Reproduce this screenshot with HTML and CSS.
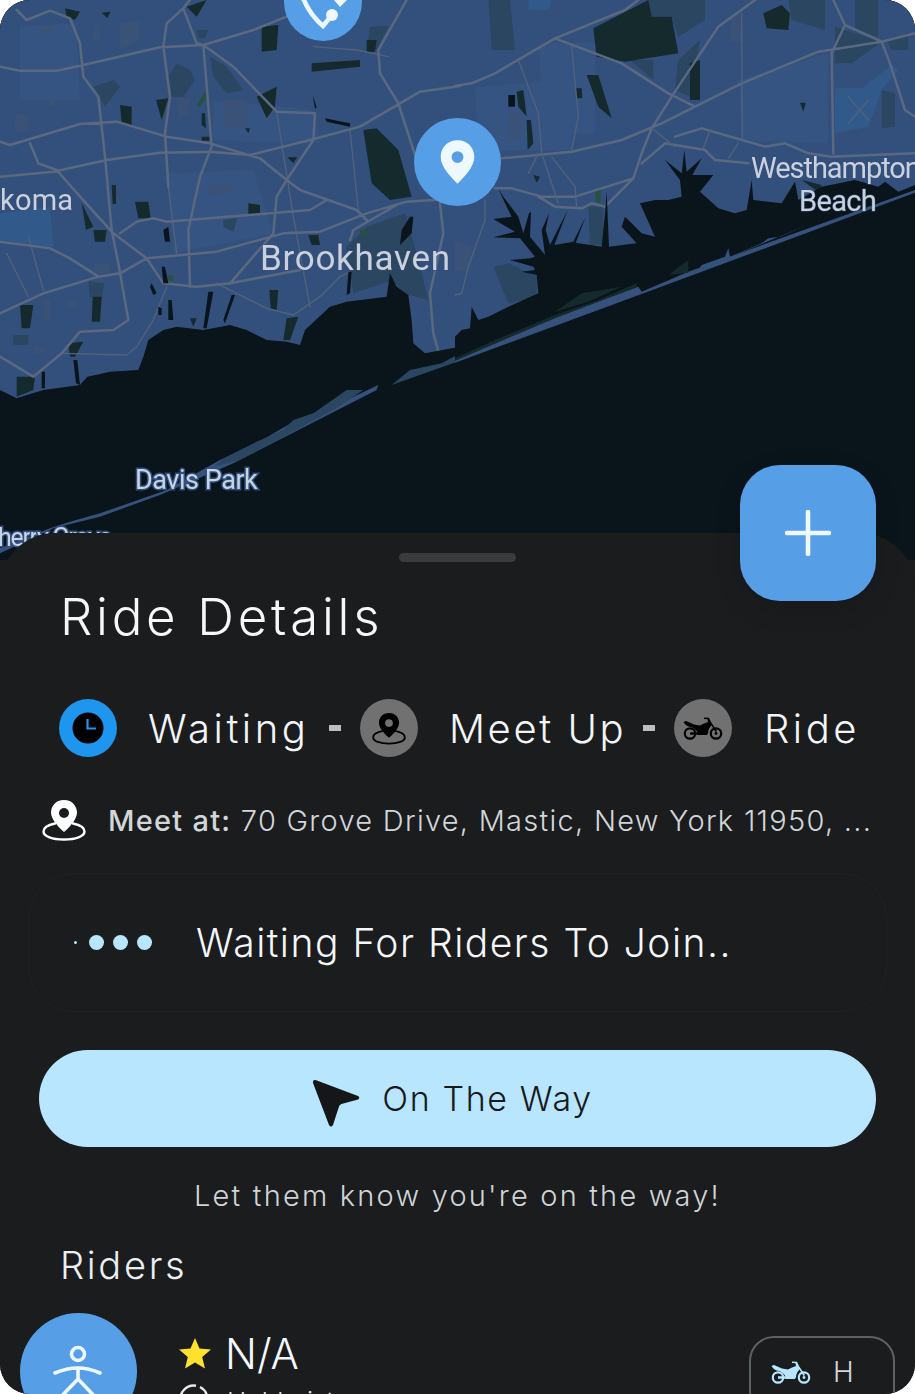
FILE: index.html
```html
<!DOCTYPE html>
<html lang="en">
<head>
<meta charset="utf-8">
<title>Ride Details</title>
<link rel="stylesheet" href="styles.css">
</head>
<body>
<svg class="defs" width="0" height="0" aria-hidden="true">
  <symbol id="moto" viewBox="0 0 40 23">
    <circle cx="7" cy="16.5" r="5.2" fill="none" stroke="currentColor" stroke-width="2.2"/>
    <circle cx="33" cy="16.5" r="5.2" fill="none" stroke="currentColor" stroke-width="2.2"/>
    <circle cx="33" cy="16.5" r="1.4" fill="currentColor"/>
    <path fill="currentColor" d="M0.5 5 L3 4 L11 7.5 L17 8.5 Q20 6.5 25 5 L24.5 2.2 L21 2 L21 0.5 L26 0.8 L28 5 L34 14 L32.5 15 L28.5 8.5 Q25.5 11 25 16 L24 18 L15 18 L14.5 15.5 Q12 11 8 10 Q3 9.5 0.5 5 Z"/>
    <path fill="currentColor" d="M7 15.3 H15 V17.7 H7 Z"/>
  </symbol>
  <symbol id="meet" viewBox="0 0 44 42">
    <path fill="currentColor" fill-rule="evenodd" d="M22 1 C13.5 1 9 7.5 9 13.5 C9 20 16 28 22 33 C28 28 35 20 35 13.5 C35 7.5 30.5 1 22 1 Z M22 9 A5 5 0 1 1 22 19 A5 5 0 0 1 22 9 Z"/>
    <path fill="none" stroke="currentColor" stroke-width="2.4" stroke-linecap="round" d="M13 24.5 C6 26 1.5 29 1.5 32.5 C1.5 37.5 10.5 40.5 22 40.5 C33.5 40.5 42.5 37.5 42.5 32.5 C42.5 29 38 26 31 24.5"/>
  </symbol>
</svg>

<main class="screen">
  <section class="map">
    <svg class="map-art" viewBox="0 0 915 560" aria-hidden="true">
      <rect class="land" width="915" height="560"/>
      <g transform="scale(.33333)">
        <path class="land-b" d="M500 520 L760 510 L820 700 L520 760 Z M640 300 L940 330 L960 430 L640 420 Z M60 80 L230 70 L240 300 L60 300 Z"/>
        <path class="land-c" d="M0 640 L150 620 L160 740 L0 720 Z"/>
        <path class="gray" d="M125 75 L155 75 L155 105 L125 105 Z M280 75 L300 75 L300 120 L280 120 Z M45 345 L85 345 L85 395 L45 395 Z M360 70 L415 60 L415 120 L360 150 Z M148 295 L165 295 L165 318 L148 318 Z M620 560 L690 545 L695 575 L625 590 Z M530 295 L570 295 L560 350 L535 350 Z M100 1040 L130 1040 L130 1060 L100 1060 Z M130 900 L150 900 L150 960 L130 960 Z M205 900 L225 900 L225 925 L205 925 Z M285 790 L330 790 L330 820 L285 820 Z M670 300 L740 300 L740 380 L670 380 Z"/>
        <path class="teal" d="M505 230 L530 190 L570 210 L585 240 L550 290 L515 290 Z M630 170 L680 200 L730 270 L680 280 L640 230 Z M280 260 L340 240 L360 260 L315 320 Z M1100 680 L1215 640 L1250 760 L1285 900 L1210 880 L1180 840 L1060 880 L1040 740 Z M1110 80 L1165 78 L1130 150 L1100 150 Z M40 1005 L85 1005 L85 1035 L40 1035 Z M265 845 L312 850 L305 900 L270 890 Z M670 660 L712 655 L700 695 L670 680 Z M590 90 L625 90 L615 115 L595 115 Z"/>
        <path class="dark" d="M785 80 L835 75 L830 150 L785 155 Z M935 190 L1080 180 L1080 200 L935 215 Z M360 315 L395 320 L395 375 L365 370 Z M405 605 L445 605 L452 655 L415 655 Z M745 610 L780 615 L780 645 L745 645 Z M245 610 L280 680 L258 690 Z M280 690 L320 690 L315 725 L285 725 Z M1090 390 L1130 385 L1195 450 L1235 590 L1170 600 L1115 550 Z M770 290 L830 260 L825 320 L800 355 Z M468 300 L505 295 L485 360 Z M60 915 L100 915 L90 985 L65 985 Z M278 890 L305 890 L300 965 L275 965 Z M50 1130 L105 1130 L100 1170 L50 1190 Z M195 25 L240 35 L225 60 L200 50 Z M305 38 L332 35 L322 55 Z M560 20 L620 0 L590 50 Z M335 555 L348 555 L348 612 L338 612 Z M808 870 L835 870 L830 930 L812 925 Z M860 955 L895 950 L870 1020 L850 1020 Z M205 1030 L250 1025 L225 1070 L210 1070 Z M925 705 L955 705 L960 735 L935 735 Z M1100 120 L1130 120 L1125 155 L1100 155 Z M735 385 L750 385 L745 400 Z M605 340 L615 340 L618 385 L605 375 Z M605 410 L628 410 L628 422 L605 422 Z M862 472 L892 472 L880 490 Z M570 955 L590 955 L580 980 Z"/>
        <path class="green" d="M590 315 L615 275 L620 290 L600 320 Z M505 826 L520 826 L520 842 L505 842 Z M1075 690 L1100 685 L1100 715 Z"/>
        <path class="road-lite" d="M1050 390 L1075 630 M830 335 L880 650 L930 920 M505 560 L530 760 M20 760 L85 890 M85 710 L130 870 M185 1060 L380 1065 L410 1040 L460 960 L500 860 M650 850 L800 925 L880 945 L960 890 L1020 830 L1050 815 M940 140 L1070 150 L1165 170"/>
        <path class="road" d="M0 200 L60 212 L170 212 L250 195 L480 142 L610 135 L760 90 L860 50 M0 530 L160 515 L320 480 L480 458 L630 455 L750 465 L930 420 L1080 380 L1200 310 L1260 275 L1380 258 M50 30 L80 60 L150 32 L210 55 L240 130 L250 230 L295 290 L315 470 L335 690 L355 790 L385 960 L340 990 L240 995 L185 1060 L100 1130 L0 1070 M490 140 L500 70 L550 25 L570 0 M550 25 L590 130 L610 135 L635 440 L600 530 L565 690 L570 860 M490 140 L510 290 L495 400 L505 560 M0 425 L30 435 L240 372 L350 365 L500 410 L630 430 L780 475 L860 540 L900 570 L1070 630 L1100 660 M0 725 L150 745 L210 775 L295 830 L360 820 L440 775 L650 755 L850 700 L960 695 L1100 640 L1220 605 L1380 595 M0 940 L130 880 L295 830 M90 430 L115 490 L170 510 L240 590 L340 700 L440 775 L490 850 L590 860 L690 850 L900 810 M360 700 L410 665 L460 655 L500 665 L930 630 L980 600 M690 850 L820 700 L830 590 L860 540 L940 420 L945 340 L830 335 L700 200 L610 135 M1220 0 L1135 150 L1140 220 L1195 310 L1250 480 M1320 610 L1330 700 L1290 880 L1300 1000 L1325 1090 M1050 720 L1060 690 L1190 615"/>
        <path class="creek" d="M490 690 L505 680 L510 725 L495 725 Z M485 800 L495 800 L505 850 L490 850 Z M625 875 L640 875 L620 985 L610 985 Z M695 885 L705 885 L675 970 L670 960 Z M505 900 L515 900 L520 960 L505 960 Z M1230 650 L1240 650 L1235 700 L1200 735 L1205 690 Z M938 285 L950 322 L945 326 Z M975 355 L1050 370 L1050 380 L980 365 Z M455 850 L470 880 L460 885 L450 860 Z M475 920 L485 925 L485 945 L475 945 Z M220 1080 L232 1080 L240 1155 L228 1150 Z M125 1115 L135 1115 L135 1165 L125 1165 Z M1045 815 L1055 815 L1050 880 L1040 885 Z"/>
        <path class="water" d="M0 1170 L50 1195 L130 1170 L240 1155 L262 1130 L330 1115 L415 1110 L430 1070 L445 1020 L490 990 L530 980 L610 990 L690 975 L740 990 L800 1020 L860 1025 L900 1035 L915 990 L990 920 L1040 905 L1160 890 L1170 820 L1190 860 L1225 885 L1235 960 L1240 1030 L1275 1060 L1380 1040 L1380 1700 L0 1700 Z"/>
        <path class="teal" d="M1175 1155 L1230 1110 L1325 1090 L1380 1060 L1380 1082 Z"/>
      </g>
      <g transform="translate(455 0) scale(.33333)">
        <path class="land-b" d="M60 260 L350 240 L350 450 L70 450 Z M850 240 L1120 160 L1120 430 L860 420 Z M250 130 L420 130 L420 400 L270 400 Z"/>
        <path class="land-c" d="M1140 265 L1220 265 L1310 195 L1330 210 L1280 270 L1240 380 L1140 400 Z M220 0 L290 0 L280 30 L220 30 Z"/>
        <path class="gray" d="M825 55 L860 40 L860 125 L825 125 Z M160 340 L200 340 L200 420 L160 420 Z M0 720 L50 740 L40 810 L0 815 Z"/>
        <path class="teal" d="M580 0 L750 0 L750 60 L670 110 L650 50 L590 50 Z M100 0 L165 0 L180 150 L110 150 Z M1000 0 L1110 0 L1110 90 L1010 60 Z M1140 80 L1280 125 L1190 190 L1140 190 Z M1200 0 L1270 0 L1270 110 L1200 95 Z M1280 270 L1320 280 L1320 380 L1280 385 Z M670 180 L735 120 L705 290 L660 270 Z M115 800 L160 790 L245 830 L245 890 L160 910 Z M400 620 L445 620 L445 735 L405 735 Z M525 180 L595 180 L595 240 Z M1295 120 L1360 100 L1360 150 L1310 150 Z"/>
        <path class="dark" d="M415 85 L580 0 L590 50 L650 50 L670 160 L510 185 L425 170 Z M925 40 L980 15 L1005 40 L1000 90 L935 85 Z M705 190 L735 180 L735 300 L705 300 Z M395 225 L430 225 L470 355 L430 320 Z M185 275 L205 270 L215 350 L190 320 Z M215 360 L228 360 L235 430 L218 450 Z M362 265 L380 265 L382 295 L365 295 Z M1035 308 L1052 308 L1045 335 Z M235 525 L255 530 L245 548 Z M1040 540 L1100 555 L1095 580 Z"/>
        <path class="green" d="M420 570 L438 570 L436 610 L422 605 Z"/>
        <path class="creek" d="M160 285 L180 285 L180 320 L160 320 Z"/>
        <path class="road" d="M0 258 L50 250 L120 220 L300 115 L510 30 L550 0 M300 115 L500 190 L640 280 L720 320 L860 250 L1090 155 L1280 125 L1380 100 M720 320 L620 370 L500 420 L350 455 L140 475 M900 0 L790 80 L650 290 L590 385 L560 460 L535 535 L360 590 L260 590 L170 565 L120 565 M535 535 L450 620 L410 610 L380 625 L300 620 L250 590 M630 430 L750 450 L780 480 L880 490 M560 490 L630 430 M660 410 L740 385 L930 440 L990 430 L1060 460 L1130 470 L1250 465 L1380 460 M1135 0 L1170 75 L1280 125 L1305 190 L1350 330 L1380 350 M1170 75 L1130 160 L1135 460"/>
        <path class="road-lite" d="M860 40 L862 420 M350 140 L370 350 L350 450 M190 180 L250 340 L260 460 L310 610 M250 460 L220 520 M290 470 L360 560 L365 620 M90 600 L90 660 L40 800 L20 880 L0 885 M765 390 L745 445 M850 430 L820 475 M1180 290 L1240 360 M1180 370 L1240 300 M590 385 L660 440"/>
        <path class="water" d="M0 1010 L20 990 L45 985 L50 920 L70 960 L100 950 L160 920 L250 880 L245 825 L200 815 L240 810 L235 800 L165 780 L225 775 L240 770 L195 715 L115 712 L180 695 L115 657 L170 650 L150 610 L130 565 L145 590 L190 650 L205 700 L222 640 L228 635 L225 710 L270 765 L260 690 L282 640 L272 690 L285 735 L338 630 L298 735 L355 725 L392 650 L362 728 L440 740 L450 640 L455 575 L462 740 L545 730 L500 680 L510 650 L560 700 L600 710 L555 610 L600 600 L640 600 L680 590 L675 540 L630 480 L680 520 L688 450 L695 515 L740 475 L712 525 L775 525 L735 575 L790 625 L840 640 L875 630 L890 540 L895 600 L980 610 L1020 545 L1030 600 L1100 560 L1200 540 L1270 560 L1290 545 L1330 575 L1380 555 L1380 1700 L0 1700 Z"/>
        <path class="strip" d="M0 1082 L300 950 L550 860 L560 875 L700 815 L1380 570 L1380 578 L560 882 L0 1088 Z"/>
        <path class="dark" d="M0 1075 L120 1020 L300 945 L430 900 L545 850 L545 862 L300 955 L0 1082 Z M300 935 L380 880 L500 860 L400 905 Z M640 825 L700 780 L700 818 Z"/>
        <path class="strip" d="M740 795 L810 770 L820 745 L825 770 L920 730 L940 715 L975 710 L1070 670 L730 810 Z"/>
      </g>
      <g transform="translate(0 380) scale(.33333)">
        <path class="strip" d="M0 520 L160 445 L300 410 L480 345 L700 250 L1130 30 L1135 15 L1040 60 L880 125 L770 190 L660 240 L500 330 L300 400 L210 425 L150 445 L0 505 Z"/>
        <path class="teal" d="M1090 30 L1040 30 L940 100 L880 120 L850 150 L770 185 L680 230 L640 260 L720 240 L1000 90 Z"/>
      </g>
      <text class="label" x="260" y="270">Brookhaven</text>
      <text class="label small" x="0" y="210">koma</text>
      <text class="label small" x="751" y="178" textLength="170">Westhampton</text>
      <text class="label small" x="799" y="211" textLength="78">Beach</text>
      <text class="label small halo" x="135" y="489" textLength="123">Davis Park</text>
      <text class="label small halo tight" x="-17" y="546" textLength="129">Cherry Grove</text>
    </svg>

    <div class="pin pin-top">
      <svg viewBox="0 0 78 78" aria-hidden="true">
        <path class="pin-stroke" d="M19 35 Q26 52 39 63 L48 52"/>
        <circle class="pin-dot" cx="48" cy="52" r="6"/>
        <path class="pin-dot" d="M50 37 L56 44 L65 35 L50 35 Z"/>
      </svg>
    </div>
    <div class="pin pin-main">
      <svg viewBox="0 0 88 88" aria-hidden="true">
        <path class="pin-shape" fill-rule="evenodd" d="M44 22 C34 22 27 29 27 39 C27 49 37 59 44 66 C51 59 61 49 61 39 C61 29 54 22 44 22 Z M44 33 A6 6 0 1 1 44 45 A6 6 0 0 1 44 33 Z"/>
      </svg>
    </div>
  </section>

  <button class="fab" type="button" aria-label="Add">
    <svg viewBox="0 0 46 46" aria-hidden="true"><path d="M23 2 V44 M2 23 H44"/></svg>
  </button>

  <section class="sheet">
    <div class="handle"></div>
    <h1 class="title">Ride Details</h1>

    <div class="steps">
      <span class="step-icon step-active">
        <svg viewBox="0 0 32 32" aria-hidden="true"><circle cx="16" cy="16" r="15.5" fill="#000"/><path d="M15.5 7 V16.5 H24" fill="none" stroke="#1e96f0" stroke-width="2.2"/></svg>
      </span>
      <span class="step-label step-label-first">Waiting</span>
      <span class="dash"></span>
      <span class="step-icon"><svg class="ico-meet" aria-hidden="true"><use href="#meet"/></svg></span>
      <span class="step-label step-label-mid">Meet Up</span>
      <span class="dash"></span>
      <span class="step-icon"><svg class="ico-moto" aria-hidden="true"><use href="#moto"/></svg></span>
      <span class="step-label step-label-last">Ride</span>
    </div>

    <div class="meet">
      <svg class="meet-icon" aria-hidden="true"><use href="#meet"/></svg>
      <p class="meet-text"><strong>Meet at:</strong> 70 Grove Drive, Mastic, New York 11950, ...</p>
    </div>

    <div class="waiting">
      <div class="dots"><i class="dot dot-tiny"></i><i class="dot"></i><i class="dot"></i><i class="dot"></i></div>
      <span class="waiting-text">Waiting For Riders To Join..</span>
    </div>

    <button class="cta" type="button">
      <svg viewBox="0 0 48 48" aria-hidden="true"><path d="M3.5 1 L46 17 Q48.5 18.5 46 20.5 L29.5 25 Q27.5 25.5 27 27.5 L21 46 Q19 49 17 46 L1 4 Q0.5 0.5 3.5 1 Z"/></svg>
      <span>On The Way</span>
    </button>
    <p class="hint">Let them know you're on the way!</p>

    <h2 class="riders">Riders</h2>
    <div class="rider">
      <div class="avatar">
        <svg viewBox="0 0 117 117" aria-hidden="true">
          <circle cx="58" cy="41" r="6.5"/>
          <path d="M35 60 Q58 50 80 60 M58 55 V66 M58 66 L36 89 M58 66 L80 89"/>
        </svg>
      </div>
      <div class="rider-info">
        <div class="rating">
          <svg viewBox="0 0 32 32" aria-hidden="true"><path d="M16 1 L20.5 11.5 L32 12.5 L23.2 20 L26 31.5 L16 25.5 L6 31.5 L8.8 20 L0 12.5 L11.5 11.5 Z"/></svg>
          <span>N/A</span>
        </div>
        <div class="rider-sub">
          <svg viewBox="0 0 30 30" aria-hidden="true"><path d="M17 1.7 A13.5 13.5 0 1 0 21 3"/></svg>
          <span>Hobbyist</span>
        </div>
      </div>
      <div class="chip">
        <svg class="chip-moto" aria-hidden="true"><use href="#moto"/></svg>
        <span>H</span>
      </div>
    </div>
  </section>
</main>
</body>
</html>
```
FILE: styles.css
```css
* { box-sizing: border-box; }
html, body { margin: 0; background: #fff; }
body { font-family: "Inter", "Liberation Sans", sans-serif; }
.defs { position: absolute; }

.screen {
  position: relative;
  width: 915px;
  height: 1394px;
  overflow: hidden;
  border-radius: 30px;
  background: #1a1c1e;
}

/* map */
.map { position: relative; height: 560px; background: #0a141b; }
.map-art { display: block; width: 915px; height: 560px; filter: blur(.6px); }
.land { fill: #33507c; }
.land-b { fill: #355481; }
.land-c { fill: #31598a; }
.gray { fill: #3a5277; }
.teal { fill: #2a4661; }
.dark { fill: #152a2c; }
.green { fill: #27523f; }
.creek { fill: #0a141b; }
.water { fill: #0a141b; }
.strip { fill: #36527c; }
.road, .road-lite { fill: none; stroke-linejoin: round; stroke-linecap: round; }
.road { stroke: #5a6980; stroke-width: 7.5; }
.road-lite { stroke: #52627c; stroke-width: 4; }
.label {
  font-family: "Roboto", "Liberation Sans", sans-serif;
  font-size: 35px;
  letter-spacing: .7px;
  fill: #cbd1dc;
  stroke: #33507c;
  stroke-width: 1px;
  paint-order: stroke;
}
.label.small { font-size: 29px; letter-spacing: .2px; }
.label.halo { fill: #c9d3e2; stroke: #2f4f7f; stroke-width: 3px; font-size: 27px; }
.label.tight { font-size: 25px; }

.pin {
  position: absolute;
  border-radius: 50%;
  background: #569fe6;
}
.pin svg { display: block; width: 100%; height: 100%; }
.pin-top { left: 284px; top: -37px; width: 78px; height: 78px; }
.pin-main { left: 414px; top: 118px; width: 87px; height: 88px; }
.pin-shape { fill: #eef8ff; }
.pin-stroke { fill: none; stroke: #eef8ff; stroke-width: 4.6; stroke-linejoin: miter; }
.pin-dot { fill: #eef8ff; }

.fab {
  position: absolute;
  z-index: 2;
  left: 740px;
  top: 465px;
  width: 136px;
  height: 136px;
  display: flex;
  align-items: center;
  justify-content: center;
  padding: 0;
  border: 0;
  border-radius: 40px;
  background: #569fe6;
  box-shadow: 0 8px 26px rgba(0, 0, 0, .14);
}
.fab svg { width: 46px; height: 46px; }
.fab path { fill: none; stroke: #eef8ff; stroke-width: 4.6; stroke-linecap: round; }

/* sheet */
.sheet {
  position: relative;
  height: 861px;
  margin-top: -27px;
  padding-top: 20px;
  border-radius: 55px 55px 0 0;
  background: #1a1c1e;
  color: #f2f5f7;
}
.handle {
  width: 117px;
  height: 9px;
  margin: 0 auto;
  border-radius: 5px;
  background: #3a3b3d;
}
.title {
  margin: 24px 0 0 60px;
  font-size: 51px;
  line-height: 62px;
  font-weight: 300;
  letter-spacing: 3.7px;
  color: #f5f7f8;
}

.steps {
  display: flex;
  align-items: center;
  margin: 51px 0 0 59px;
  height: 58px;
}
.step-icon {
  flex: none;
  width: 58px;
  height: 58px;
  display: flex;
  align-items: center;
  justify-content: center;
  border-radius: 50%;
  background: #717171;
  color: #000;
}
.step-active { background: #1e96f0; }
.step-active svg { width: 32px; height: 32px; }
.ico-meet { width: 34px; height: 33px; }
.ico-moto { width: 40px; height: 23px; }
.step-label {
  font-size: 40px;
  font-weight: 300;
  letter-spacing: 3.5px;
  line-height: 60px;
  height: 58px;
  color: #f2f5f7;
}
.step-label-first { margin-left: 31px; width: 181px; }
.step-label-mid { margin-left: 31px; width: 194px; letter-spacing: 2.6px; }
.step-label-last { margin-left: 32px; }
.dash { flex: none; width: 12px; height: 6px; background: #bdbdbd; }
.step-label-first + .dash { margin-right: 19px; }
.step-label-mid + .dash { margin-right: 19px; }

.meet {
  display: flex;
  align-items: center;
  margin: 42px 0 0 42px;
  height: 42px;
}
.meet-icon { flex: none; width: 44px; height: 42px; color: #fff; }
.meet-text {
  margin: 0 0 0 22px;
  font-size: 29px;
  font-weight: 300;
  letter-spacing: 1.27px;
  white-space: nowrap;
  color: #d2d6d9;
}
.meet-text strong { font-weight: 500; }

.waiting {
  display: flex;
  align-items: center;
  width: 859px;
  height: 139px;
  margin: 32px 0 0 28px;
  border: 1px solid #1f2123;
  border-radius: 46px;
}
.dots {
  display: flex;
  align-items: center;
  gap: 9px;
  margin-left: 45px;
  width: 122px;
}
.dot { width: 15px; height: 15px; border-radius: 50%; background: #b9e6ff; }
.dot-tiny { width: 3px; height: 3px; margin-right: 3px; }
.waiting-text {
  font-size: 39px;
  font-weight: 300;
  letter-spacing: 1.5px;
  color: #f4f6f8;
  white-space: nowrap;
}

.cta {
  display: flex;
  align-items: center;
  justify-content: center;
  gap: 22px;
  width: 837px;
  height: 97px;
  margin: 38px 0 0 39px;
  padding: 0 10px 0 0;
  border: 0;
  border-radius: 49px;
  background: #b9e6ff;
  font-family: inherit;
  font-size: 34px;
  font-weight: 300;
  letter-spacing: 1.6px;
  color: #17191b;
}
.cta svg { width: 48px; height: 48px; margin-top: 9px; }
.cta path { fill: #141618; }

.hint {
  margin: 32px 0 0;
  text-align: center;
  font-size: 29px;
  line-height: 34px;
  font-weight: 300;
  letter-spacing: 2.2px;
  color: #d0d4d7;
}
.riders {
  margin: 29px 0 0 60px;
  font-size: 38px;
  line-height: 46px;
  font-weight: 300;
  letter-spacing: 2.7px;
  color: #eceff1;
}

.rider {
  display: flex;
  align-items: flex-start;
  margin: 25px 0 0 20px;
}
.avatar {
  flex: none;
  width: 117px;
  height: 117px;
  border-radius: 50%;
  background: #569fe6;
}
.avatar svg { display: block; width: 100%; height: 100%; }
.avatar circle, .avatar path { fill: none; stroke: #eef8ff; stroke-width: 3.6; stroke-linecap: round; }
.rider-info { margin: 19px 0 0 42px; }
.rating { display: flex; align-items: center; gap: 14px; height: 42px; }
.rating svg { width: 32px; height: 32px; fill: #fde12d; }
.rating span { font-size: 42px; font-weight: 300; color: #f2f8fc; }
.rider-sub { display: flex; align-items: flex-start; gap: 18px; margin-top: 10px; color: #e6e9eb; }
.rider-sub svg { flex: none; width: 30px; height: 30px; }
.rider-sub path { fill: none; stroke: #e6e9eb; stroke-width: 2.4; }
.rider-sub span { padding-top: 3px; font-size: 26px; line-height: 30px; font-weight: 300; }

.chip {
  flex: none;
  display: flex;
  align-items: center;
  gap: 22px;
  width: 146px;
  height: 80px;
  margin: 23px 20px 0 auto;
  padding: 0 0 8px 20px;
  border: 2px solid #5a6264;
  border-radius: 25px;
}
.chip-moto { flex: none; width: 40px; height: 23px; color: #b9e6ff; }
.chip span { font-size: 28px; font-weight: 300; color: #d4d7d9; }
```
